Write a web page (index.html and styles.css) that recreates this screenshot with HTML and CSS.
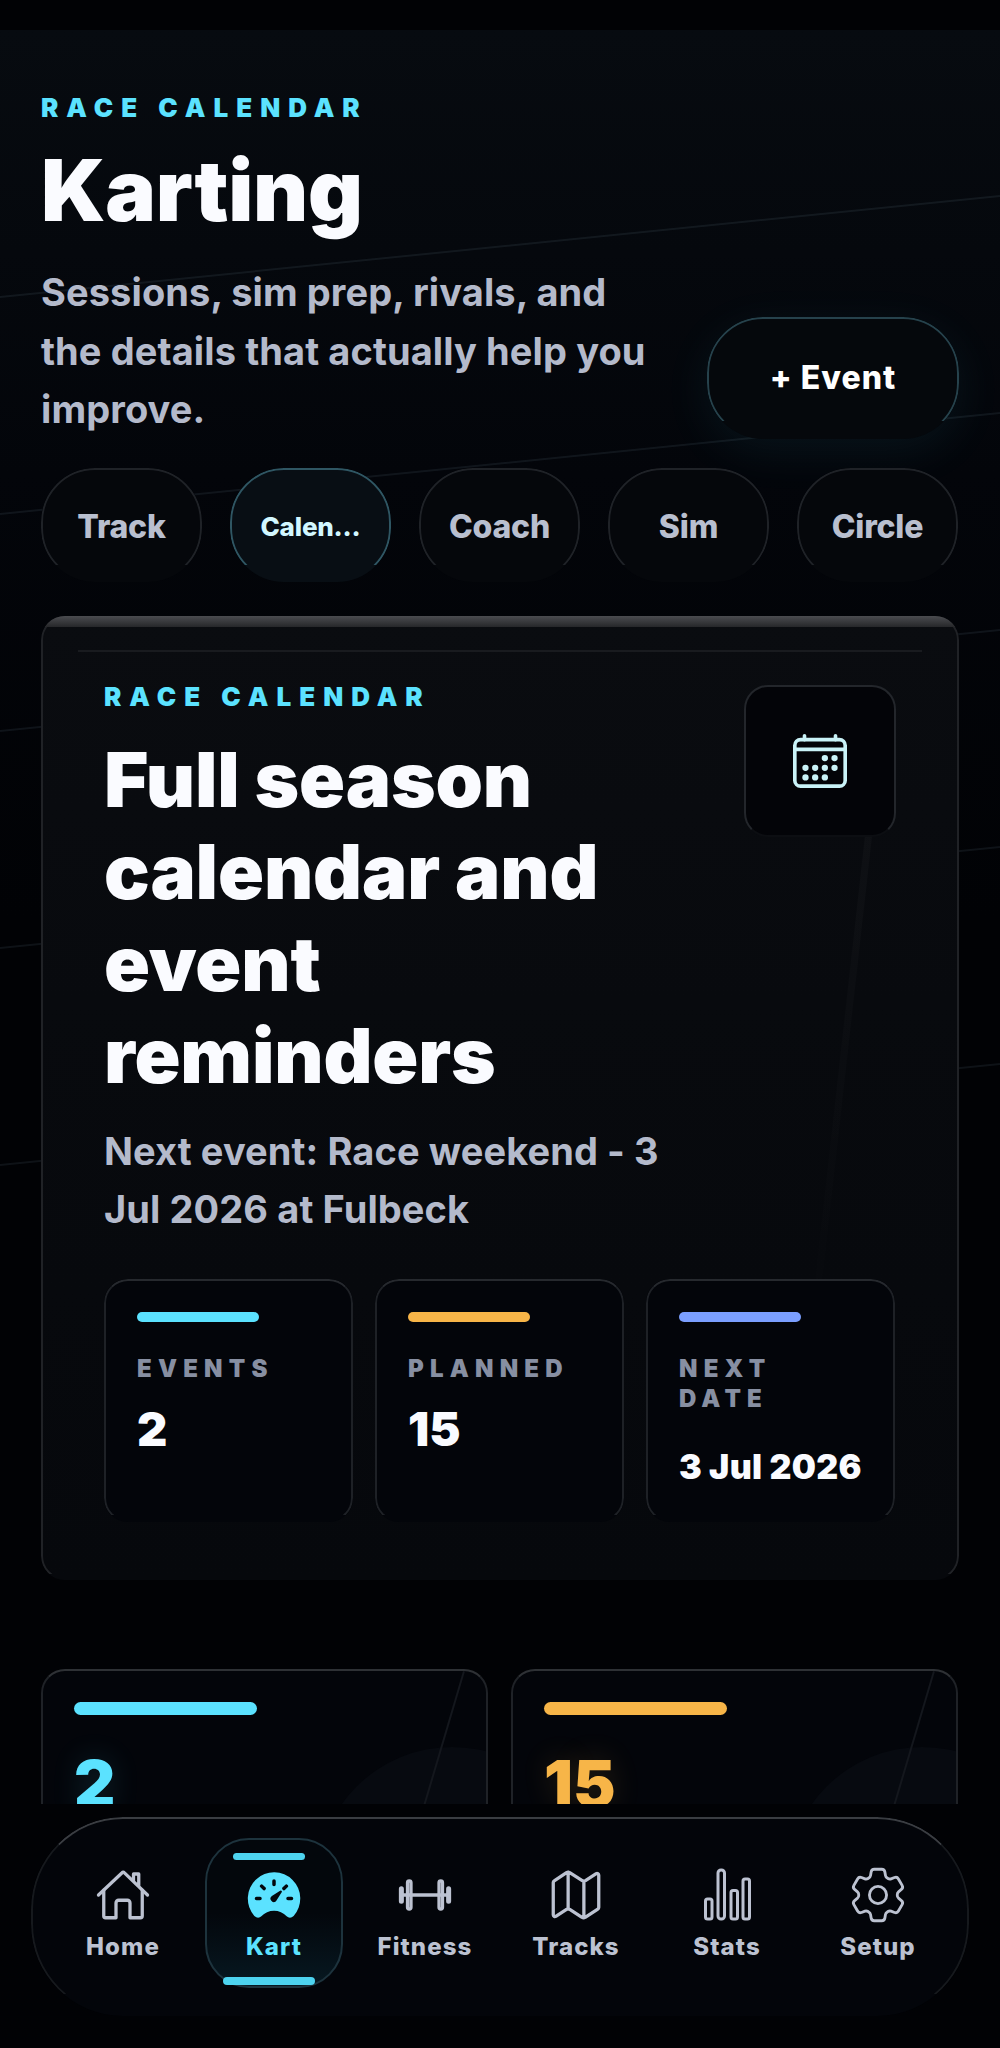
FILE: index.html
```html
<!DOCTYPE html>
<html lang="en">
  <head>
    <meta charset="UTF-8" />
    <meta name="viewport" content="width=device-width, initial-scale=1.0" />
    <title>Karting</title>
    <link rel="stylesheet" href="styles.css">
  </head>
  <body>
    <div id="screen">
      <div id="statusBar"></div>

      <div id="scroll">
        <!-- faint track lines behind the page -->
        <svg class="track-lines" width="1000" height="1800" viewBox="0 0 1000 1800">
          <path d="M0 297L1000 196M0 514L1000 413M0 731L1000 630M0 948L1000 847M0 1165L1000 1064" />
        </svg>

        <header class="page-head">
          <div class="page-head-text">
            <p class="eyebrow">RACE CALENDAR</p>
            <h1>Karting</h1>
            <p class="lead">Sessions, sim prep, rivals, and the details that actually help you improve.</p>
          </div>
          <a class="event-btn" href="javascript:;">+ Event</a>
        </header>

        <nav class="tabs">
          <a class="tab" href="javascript:;">Track</a>
          <a class="tab active" href="javascript:;">Calen...</a>
          <a class="tab" href="javascript:;">Coach</a>
          <a class="tab" href="javascript:;">Sim</a>
          <a class="tab" href="javascript:;">Circle</a>
        </nav>

        <section class="hero">
          <div class="hero-rule"></div>
          <div class="hero-streak"></div>
          <div class="hero-top">
            <div class="hero-copy">
              <p class="eyebrow">RACE CALENDAR</p>
              <h2>Full season calendar and event reminders</h2>
            </div>
            <div class="hero-icon">
              <svg width="62" height="62" viewBox="0 0 512 512" class="line-icon">
                <rect x="48" y="80" width="416" height="384" rx="48" />
                <path d="M128 48v32M384 48v32M464 160H48" />
                <g class="dots">
                  <circle cx="296" cy="232" r="26" />
                  <circle cx="376" cy="232" r="26" />
                  <circle cx="136" cy="312" r="26" />
                  <circle cx="216" cy="312" r="26" />
                  <circle cx="296" cy="312" r="26" />
                  <circle cx="376" cy="312" r="26" />
                  <circle cx="136" cy="392" r="26" />
                  <circle cx="216" cy="392" r="26" />
                  <circle cx="296" cy="392" r="26" />
                </g>
              </svg>
            </div>
          </div>
          <p class="lead hero-lead">Next event: Race weekend - 3 Jul 2026 at Fulbeck</p>

          <div class="stats">
            <div class="stat">
              <span class="bar bar-cyan"></span>
              <span class="stat-label">EVENTS</span>
              <span class="stat-value">2</span>
            </div>
            <div class="stat">
              <span class="bar bar-amber"></span>
              <span class="stat-label">PLANNED</span>
              <span class="stat-value">15</span>
            </div>
            <div class="stat">
              <span class="bar bar-blue"></span>
              <span class="stat-label">NEXT DATE</span>
              <span class="stat-value stat-value-small">3 Jul 2026</span>
            </div>
          </div>
        </section>

        <section class="summary">
          <div class="summary-card">
            <span class="bar bar-cyan"></span>
            <span class="summary-value cyan">2</span>
          </div>
          <div class="summary-card">
            <span class="bar bar-amber"></span>
            <span class="summary-value amber">15</span>
          </div>
        </section>
      </div>

      <div id="dock">
        <nav class="dock-nav">
          <a class="dock-item" href="javascript:;">
            <svg width="56" height="56" viewBox="0 0 512 512" class="line-icon">
              <path d="M80 212v236a16 16 0 0016 16h96V328a24 24 0 0124-24h80a24 24 0 0124 24v136h96a16 16 0 0016-16V212" />
              <path d="M480 256L266.89 52c-5-5.28-13.64-5.34-18.9 0L32 256M400 179V64h-48v69" />
            </svg>
            <span>Home</span>
          </a>
          <a class="dock-item active" href="javascript:;">
            <svg width="56" height="56" viewBox="0 0 512 512" class="fill-icon">
              <path d="M425.7 118.25A240 240 0 0076.32 447l.18.2c.33.35.64.71 1 1.05.74.84 1.58 1.79 2.57 2.78a41.17 41.17 0 0060.36-.42 157.13 157.13 0 01231.26 0 41.18 41.18 0 0060.65.06l3.21-3.5.18-.2a239.93 239.93 0 00-10-328.76zM240 128a16 16 0 0132 0v32a16 16 0 01-32 0zM128 304H96a16 16 0 010-32h32a16 16 0 010 32zm48.8-95.2a16 16 0 01-22.62 0l-22.63-22.62a16 16 0 0122.63-22.63l22.62 22.63a16 16 0 010 22.62zm149.3 23.1l-47.5 75.5a31 31 0 01-7 7 30.11 30.11 0 01-35-49l75.5-47.5a10.23 10.23 0 0111.7 0 10.06 10.06 0 012.3 14zm31.72-23.1a16 16 0 01-22.62-22.62l22.62-22.63a16 16 0 0122.63 22.63zM416 304h-32a16 16 0 010-32h32a16 16 0 010 32z" />
            </svg>
            <span>Kart</span>
          </a>
          <a class="dock-item" href="javascript:;">
            <svg width="56" height="56" viewBox="0 0 512 512" class="line-icon">
              <path d="M48 256h416" />
              <rect x="384" y="128" width="32" height="256" rx="16" />
              <rect x="96" y="128" width="32" height="256" rx="16" />
              <rect x="32" y="192" width="16" height="128" rx="8" />
              <rect x="464" y="192" width="16" height="128" rx="8" />
            </svg>
            <span>Fitness</span>
          </a>
          <a class="dock-item" href="javascript:;">
            <svg width="56" height="56" viewBox="0 0 512 512" class="line-icon">
              <path d="M313.27 124.64L198.73 51.36a32 32 0 00-29.28.35L56.51 127.49A16 16 0 0048 141.63v295.8a16 16 0 0023.49 14.14l97.82-63.79a32 32 0 0129.5-.24l111.86 73a32 32 0 0029.27-.11l115.43-75.94a16 16 0 008.63-14.2V74.57a16 16 0 00-23.49-14.14l-98 63.86a32 32 0 01-29.75.35zM328 128v336M184 48v336" />
            </svg>
            <span>Tracks</span>
          </a>
          <a class="dock-item" href="javascript:;">
            <svg width="56" height="56" viewBox="0 0 56 56" class="line-icon thin">
              <rect x="6.5" y="32" width="6.5" height="20" rx="2" />
              <rect x="19" y="3" width="6.5" height="49" rx="3" />
              <rect x="32" y="23.5" width="6.5" height="28.5" rx="2" />
              <rect x="44" y="12" width="6.5" height="40" rx="2" />
            </svg>
            <span>Stats</span>
          </a>
          <a class="dock-item" href="javascript:;">
            <svg width="56" height="56" viewBox="2.2 2.2 19.6 19.6" class="line-icon gear">
              <path d="M9.594 3.94c.09-.542.56-.94 1.11-.94h2.593c.55 0 1.02.398 1.11.94l.213 1.281c.063.374.313.686.645.87.074.04.147.083.22.127.325.196.72.257 1.075.124l1.217-.456a1.125 1.125 0 0 1 1.37.49l1.296 2.247a1.125 1.125 0 0 1-.26 1.431l-1.003.827c-.293.241-.438.613-.43.992a7.723 7.723 0 0 1 0 .255c-.008.378.137.75.43.991l1.004.827c.424.35.534.955.26 1.43l-1.298 2.247a1.125 1.125 0 0 1-1.369.491l-1.217-.456c-.355-.133-.75-.072-1.076.124a6.47 6.47 0 0 1-.22.128c-.331.183-.581.495-.644.869l-.213 1.281c-.09.543-.56.94-1.11.94h-2.594c-.55 0-1.019-.398-1.11-.94l-.213-1.281c-.062-.374-.312-.686-.644-.87a6.52 6.52 0 0 1-.22-.127c-.325-.196-.72-.257-1.076-.124l-1.217.456a1.125 1.125 0 0 1-1.369-.49l-1.297-2.247a1.125 1.125 0 0 1 .26-1.431l1.004-.827c.292-.24.437-.613.43-.991a6.932 6.932 0 0 1 0-.255c.007-.38-.138-.751-.43-.992l-1.004-.827a1.125 1.125 0 0 1-.26-1.43l1.297-2.247a1.125 1.125 0 0 1 1.37-.491l1.216.456c.356.133.751.072 1.076-.124.072-.044.146-.086.22-.128.332-.183.582-.495.644-.869l.214-1.28Z" />
              <circle cx="12" cy="12" r="3" />
            </svg>
            <span>Setup</span>
          </a>
        </nav>
      </div>
    </div>
  </body>
</html>
```

FILE: styles.css
```css
* {
  margin: 0;
  padding: 0;
  box-sizing: border-box;
}
body {
  background-color: #000;
  font-family: Inter, "Liberation Sans", sans-serif;
  color: #fafbff;
}
a {
  color: inherit;
  text-decoration: none;
}
#screen {
  width: 1000px;
  height: 2048px;
  display: flex;
  flex-direction: column;
  overflow: hidden;
}
#statusBar {
  height: 30px;
  background-color: #010205;
}
/* 内容区域，底部被导航盖住 */
#scroll {
  position: relative;
  height: 1774px;
  overflow: hidden;
  padding: 65px 41px 0;
  background: linear-gradient(#070b10, #03050a 25%, #010205 50%);
}
.track-lines {
  position: absolute;
  left: 0;
  top: -30px;
}
.track-lines path {
  fill: none;
  stroke: rgba(140, 170, 190, 0.1);
  stroke-width: 2;
}

.page-head,
.tabs,
.hero,
.summary {
  position: relative;
}
.page-head {
  display: flex;
  justify-content: space-between;
  align-items: flex-end;
}
.page-head-text {
  width: 640px;
}
.eyebrow {
  font-size: 26px;
  line-height: 26px;
  font-weight: 900;
  letter-spacing: 8px;
  color: #5be2ff;
}
h1 {
  margin-top: 24px;
  font-size: 85px;
  line-height: 92px;
  font-weight: 900;
  letter-spacing: -0.2px;
}
.lead {
  font-size: 38px;
  line-height: 58.5px;
  font-weight: 700;
  letter-spacing: 0.1px;
  color: #b4bacb;
}
.page-head .lead {
  margin-top: 26px;
  width: 615px;
}
.event-btn {
  position: relative;
  width: 252px;
  height: 122px;
  display: flex;
  align-items: center;
  justify-content: center;
  font-size: 32px;
  font-weight: 800;
  letter-spacing: 1px;
  color: #fff;
  background-color: #05080c;
  border-radius: 56px;
  box-shadow: 0 12px 50px rgba(91, 226, 255, 0.07);
}
/* 边框到下面就消失 */
.event-btn::before,
.tab::before,
.hero::before,
.stat::before,
.dock-nav::before {
  content: "";
  position: absolute;
  inset: 0;
  border: 2px solid #22292f;
  border-radius: inherit;
  pointer-events: none;
  -webkit-mask-image: linear-gradient(#000 85%, transparent 85%);
  mask-image: linear-gradient(#000 85%, transparent 85%);
}
.event-btn::before {
  border-color: #26424c;
}

.tabs {
  margin-top: 29px;
  display: grid;
  grid-template-columns: repeat(5, 161px);
  gap: 28px;
}
.tab {
  position: relative;
  height: 114px;
  padding-top: 4px;
  display: flex;
  align-items: center;
  justify-content: center;
  font-size: 32px;
  font-weight: 800;
  letter-spacing: -0.2px;
  color: #b9bfcf;
  background-color: #05070b;
  border-radius: 54px;
}
.tab::before {
  border-color: #1f2227;
}
.tab.active {
  font-size: 26px;
  letter-spacing: -0.2px;
  color: #d2f7ff;
  background-color: #080e14;
}
.tab.active::before {
  border-color: #2f5663;
}

.hero {
  margin-top: 34px;
  height: 964px;
  padding: 69px 63px 0;
  background: linear-gradient(#0a0c10, #080a0e 40%, #06080c);
  border-radius: 24px;
}
.hero::before {
  border-color: #202226;
  -webkit-mask-image: linear-gradient(#000 99.4%, transparent 99.4%);
  mask-image: linear-gradient(#000 99.4%, transparent 99.4%);
}
/* 顶部的亮边 */
.hero::after {
  content: "";
  position: absolute;
  left: 0;
  right: 0;
  top: 0;
  height: 24px;
  border-radius: 24px 24px 0 0;
  background: linear-gradient(#4b4c50, #26272a 11px, transparent 11px);
}
.hero-rule {
  position: absolute;
  left: 37px;
  right: 37px;
  top: 34px;
  height: 2px;
  background-color: #191b1f;
}
.hero-streak {
  position: absolute;
  left: 824px;
  top: 220px;
  width: 7px;
  height: 446px;
  background: linear-gradient(rgba(255, 255, 255, 0.025), rgba(255, 255, 255, 0.005));
  transform: rotate(6.4deg);
  transform-origin: top center;
}
.hero-top {
  position: relative;
  display: flex;
  justify-content: space-between;
}
.hero-copy {
  width: 540px;
}
.hero-copy .eyebrow {
  line-height: 24px;
}
h2 {
  margin-top: 24px;
  font-size: 76px;
  line-height: 92px;
  font-weight: 900;
  letter-spacing: -0.15px;
}
.hero-icon {
  width: 152px;
  height: 152px;
  display: flex;
  align-items: center;
  justify-content: center;
  background-color: #030408;
  border: 2px solid #23262b;
  border-bottom-color: #0c0e12;
  border-radius: 24px;
}
.line-icon {
  fill: none;
  stroke: #bcc2d1;
  stroke-width: 30;
  stroke-linecap: round;
  stroke-linejoin: round;
}
.line-icon .dots {
  fill: #c9f3f8;
  stroke: none;
}
.hero-icon .line-icon {
  stroke: #c9f3f8;
}
.line-icon.thin {
  stroke-width: 3;
}
.line-icon.gear {
  stroke-width: 1;
}
.fill-icon {
  fill: #5be2ff;
}
.hero-lead {
  position: relative;
  margin-top: 21px;
  width: 600px;
}

.stats {
  position: relative;
  margin-top: 40px;
  display: grid;
  grid-template-columns: repeat(3, 249px);
  gap: 22px;
}
.stat {
  position: relative;
  height: 243px;
  padding: 33px 33px 0;
  display: flex;
  flex-direction: column;
  align-items: flex-start;
  background-color: #03050a;
  border-radius: 24px;
}
.stat::before {
  border-color: #1e2126;
  border-top-color: #26292e;
  -webkit-mask-image: linear-gradient(#000 97%, transparent 97%);
  mask-image: linear-gradient(#000 97%, transparent 97%);
}
.bar {
  display: block;
  flex: none;
  width: 122px;
  height: 10px;
  border-radius: 5px;
}
.bar-cyan {
  background-color: #5be2ff;
}
.bar-amber {
  background-color: #f7b548;
}
.bar-blue {
  background-color: #7b9fff;
}
.stat-label {
  margin-top: 32px;
  font-size: 24px;
  line-height: 30px;
  font-weight: 900;
  letter-spacing: 6.2px;
  color: #878fa2;
}
.stat-value {
  margin-top: 20px;
  font-size: 47px;
  line-height: 50px;
  font-weight: 900;
}
.stat-value-small {
  margin-top: 28px;
  font-size: 34px;
  line-height: 50px;
  letter-spacing: 0.3px;
  white-space: nowrap;
}

.summary {
  margin-top: 89px;
  display: grid;
  grid-template-columns: 447px 447px;
  gap: 23px;
}
.summary-card {
  position: relative;
  height: 300px;
  padding: 31px 31px 0;
  background-color: #03050a;
  border: 2px solid #1f2227;
  border-top-color: #2e3135;
  border-radius: 24px;
  overflow: hidden;
}
/* 卡片右下角的圆和斜线 */
.summary-card::before {
  content: "";
  position: absolute;
  left: 274px;
  top: 76px;
  width: 270px;
  height: 270px;
  border-radius: 50%;
  background-color: #070a10;
}
.summary-card::after {
  content: "";
  position: absolute;
  left: 420px;
  top: 0;
  width: 2px;
  height: 142px;
  background-color: #14171d;
  transform: rotate(16.5deg);
  transform-origin: top left;
}
.summary-card .bar {
  width: 183px;
  height: 13px;
  border-radius: 7px;
}
.summary-value {
  position: relative;
  display: block;
  margin-top: 29px;
  font-size: 64px;
  line-height: 80px;
  font-weight: 900;
  z-index: 1;
}
.cyan {
  color: #5be2ff;
  text-shadow: 0 0 30px rgba(91, 226, 255, 0.16);
}
.amber {
  color: #f7b548;
  text-shadow: 0 0 30px rgba(247, 181, 72, 0.16);
}

#dock {
  flex: 1;
  padding: 13px 31px 0;
  background-color: #010205;
}
.dock-nav {
  position: relative;
  height: 199px;
  padding: 21px 23px 0;
  display: grid;
  grid-template-columns: repeat(6, 138px);
  grid-auto-rows: 150px;
  gap: 13px;
  background-color: #03050a;
  border-radius: 92px;
}
.dock-nav::before {
  border-color: #16191d;
  border-top-color: #3a3d42;
  -webkit-mask-image: linear-gradient(#000 89%, transparent 89%);
  mask-image: linear-gradient(#000 89%, transparent 89%);
}
.dock-item {
  position: relative;
  height: 150px;
  padding-top: 29px;
  display: flex;
  flex-direction: column;
  align-items: center;
  font-size: 24px;
  line-height: 30px;
  font-weight: 800;
  letter-spacing: 1.1px;
  color: #bcc2d1;
  border-radius: 44px;
}
.dock-item span {
  margin-top: 9px;
}
.dock-item.active {
  color: #5be2ff;
  background: linear-gradient(#03070c 50%, #071821);
  border: 2px solid #1d333d;
  padding-top: 27px;
}
.dock-item.active::before {
  content: "";
  position: absolute;
  left: 26px;
  top: 13px;
  width: 72px;
  height: 7px;
  border-radius: 4px;
  background-color: #4dd3ef;
}
.dock-item.active::after {
  content: "";
  position: absolute;
  left: 16px;
  bottom: 1px;
  width: 92px;
  height: 8px;
  border-radius: 4px;
  background-color: #4dd3ef;
}
```
